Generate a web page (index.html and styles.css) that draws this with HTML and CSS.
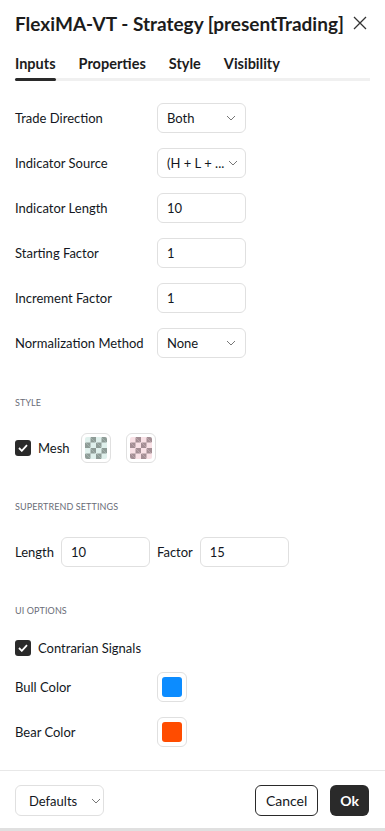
FILE: index.html
```html
<!DOCTYPE html>
<html lang="en">
<head>
    <meta charset="UTF-8">
    <meta name="viewport" content="width=device-width, initial-scale=1.0">
    <title>FlexiMA-VT - Strategy</title>
    <link rel="stylesheet" href="styles.css">
</head>
<body>
    <div class="dialog">
        <div class="header">
            <h1>FlexiMA-VT - Strategy [presentTrading]</h1>
            <svg class="close" width="16" height="16" viewBox="0 0 16 16">
                <path d="M2 2L14 14M14 2L2 14" stroke="#333" stroke-width="1.3" fill="none"/>
            </svg>
        </div>
        <div class="tabs">
            <span class="tab active">Inputs</span>
            <span class="tab">Properties</span>
            <span class="tab">Style</span>
            <span class="tab">Visibility</span>
        </div>

        <div class="content">
            <div class="row">
                <span class="label">Trade Direction</span>
                <div class="field select"><span>Both</span> <svg class="chev" width="10" height="6" viewBox="0 0 10 6"><path d="M1 1l4 4 4-4" stroke="#777" fill="none"/></svg></div>
            </div>
            <div class="row">
                <span class="label">Indicator Source</span>
                <div class="field select"><span>(H + L + ...</span> <svg class="chev" width="10" height="6" viewBox="0 0 10 6"><path d="M1 1l4 4 4-4" stroke="#777" fill="none"/></svg></div>
            </div>
            <div class="row">
                <span class="label">Indicator Length</span>
                <div class="field">10</div>
            </div>
            <div class="row">
                <span class="label">Starting Factor</span>
                <div class="field">1</div>
            </div>
            <div class="row">
                <span class="label">Increment Factor</span>
                <div class="field">1</div>
            </div>
            <div class="row">
                <span class="label">Normalization Method</span>
                <div class="field select"><span>None</span> <svg class="chev" width="10" height="6" viewBox="0 0 10 6"><path d="M1 1l4 4 4-4" stroke="#777" fill="none"/></svg></div>
            </div>

            <div class="section first">STYLE</div>
            <div class="row check-row">
                <span class="checkbox"><svg width="10" height="8" viewBox="0 0 10 8"><path d="M1 4l2.8 2.8L9 1.2" stroke="#fff" stroke-width="1.8" fill="none"/></svg></span>
                <span class="check-label mesh-label">Mesh</span>
                <span class="swatch mesh-green"><span class="mesh"></span></span>
                <span class="swatch mesh-red"><span class="mesh"></span></span>
            </div>

            <div class="section">SUPERTREND SETTINGS</div>
            <div class="row inline-row">
                <span class="label">Length</span>
                <div class="field">10</div>
                <span class="label">Factor</span>
                <div class="field">15</div>
            </div>

            <div class="section tight">UI OPTIONS</div>
            <div class="row check-row short">
                <span class="checkbox"><svg width="10" height="8" viewBox="0 0 10 8"><path d="M1 4l2.8 2.8L9 1.2" stroke="#fff" stroke-width="1.8" fill="none"/></svg></span>
                <span class="check-label">Contrarian Signals</span>
            </div>
            <div class="row">
                <span class="label">Bull Color</span>
                <span class="swatch"><span class="fill" style="background:#0c8cff"></span></span>
            </div>
            <div class="row">
                <span class="label">Bear Color</span>
                <span class="swatch"><span class="fill" style="background:#ff4c00"></span></span>
            </div>
        </div>

        <div class="footer">
            <div class="btn defaults">Defaults <svg class="chev" width="10" height="6" viewBox="0 0 10 6"><path d="M1 1l4 4 4-4" stroke="#777" fill="none"/></svg></div>
            <div class="spacer"></div>
            <div class="btn cancel">Cancel</div>
            <div class="btn ok">Ok</div>
        </div>
    </div>
</body>
</html>
```

FILE: styles.css
```css
body {
    margin: 0;
    font-family: Lato, "Liberation Sans", sans-serif;
    color: #131722;
    background: #fff;
}
.dialog {
    width: 385px;
    height: 831px;
    display: flex;
    flex-direction: column;
    border-bottom: 3px solid #e0e0e0;
    box-sizing: border-box;
}
.header {
    display: flex;
    align-items: center;
    padding: 11px 15px 0 15px;
    height: 24px;
}
.header h1 {
    margin: 0;
    font-size: 19px;
    font-weight: 700;
    white-space: nowrap;
    color: #1c1c1c;
}
.close {
    margin-left: 8px;
}
.tabs {
    display: flex;
    gap: 23px;
    margin: 22px 15px 0 15px;
    border-bottom: 3px solid #f0f0f0;
    height: 21px;
}
.tab {
    font-size: 14.5px;
    font-weight: 700;
    color: #1c1c1c;
    position: relative;
    height: 21px;
    line-height: 14px;
}
.tab.active::after {
    content: "";
    position: absolute;
    left: 0;
    right: 0;
    bottom: -3px;
    height: 3px;
    border-radius: 2px;
    background: #2a2a2a;
}
.content {
    flex: 1;
    padding: 22px 15px 0 15px;
}
.row {
    display: flex;
    align-items: center;
    height: 30px;
    margin-bottom: 15px;
}
.label {
    font-size: 13px;
    width: 142px;
    flex-shrink: 0;
}
.field {
    width: 89px;
    height: 30px;
    box-sizing: border-box;
    border: 1px solid #e0e0e0;
    border-radius: 6px;
    display: flex;
    align-items: center;
    padding: 0 9px;
    font-size: 13px;
    white-space: nowrap;
}
.select {
    justify-content: space-between;
}
.chev {
    margin-left: 4px;
    flex-shrink: 0;
}
.section {
    font-size: 9px;
    line-height: 12px;
    color: #6a6d78;
    margin: 38px 0 24px 0;
    letter-spacing: 0.1px;
}
.section.first {
    margin-top: 39px;
}
.section.tight {
    margin-bottom: 23px;
}
.checkbox {
    width: 16px;
    height: 16px;
    border-radius: 3px;
    background: #2a2a2a;
    display: flex;
    align-items: center;
    justify-content: center;
    flex-shrink: 0;
}
.check-label {
    font-size: 13px;
    margin-left: 7px;
}
.mesh-label {
    width: 43px;
    flex-shrink: 0;
}
.swatch {
    width: 30px;
    height: 30px;
    box-sizing: border-box;
    border: 1px solid #e0e0e0;
    border-radius: 6px;
    display: flex;
    align-items: center;
    justify-content: center;
    margin-right: 15px;
    flex-shrink: 0;
}
.fill {
    width: 20px;
    height: 20px;
    border-radius: 3px;
}
.mesh {
    width: 22px;
    height: 22px;
    border-radius: 2px;
    background-size: 11px 11px;
    background-position: 0 0, 5.5px 5.5px;
}
.mesh-green .mesh {
    background-color: #dff0ec;
    background-image:
        linear-gradient(45deg, #8e9c97 25%, transparent 25%, transparent 75%, #8e9c97 75%),
        linear-gradient(45deg, #8e9c97 25%, transparent 25%, transparent 75%, #8e9c97 75%);
}
.mesh-red .mesh {
    background-color: #f9e1e6;
    background-image:
        linear-gradient(45deg, #a48e94 25%, transparent 25%, transparent 75%, #a48e94 75%),
        linear-gradient(45deg, #a48e94 25%, transparent 25%, transparent 75%, #a48e94 75%);
}
.inline-row .label {
    width: auto;
    margin-right: 7px;
}
.inline-row .field + .label {
    margin-left: 7px;
}
.short {
    height: 16px;
    margin-bottom: 16px;
}
.footer {
    display: flex;
    align-items: center;
    border-top: 1px solid #e8e8e8;
    padding: 14px 16px 12px 15px;
}
.spacer {
    flex: 1;
}
.btn {
    height: 31px;
    box-sizing: border-box;
    border-radius: 6px;
    display: flex;
    align-items: center;
    font-size: 13px;
}
.defaults {
    width: 89px;
    border: 1px solid #e0e0e0;
    padding: 0 0 0 13px;
    gap: 10px;
}
.cancel {
    border: 1px solid #2a2a2a;
    padding: 0 10px;
    font-size: 14px;
    margin-right: 12px;
}
.ok {
    background: #2a2a2a;
    color: #fff;
    font-weight: 700;
    font-size: 14px;
    padding: 0 10px;
}
```
